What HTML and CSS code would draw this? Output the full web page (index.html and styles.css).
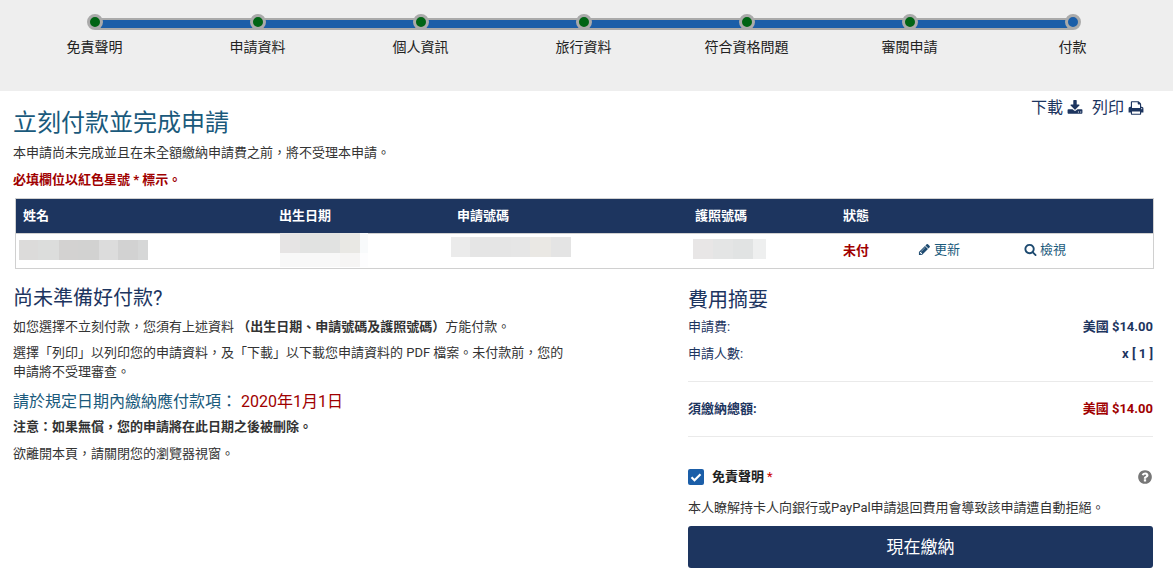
FILE: index.html
```html
<!DOCTYPE html>
<html lang="zh-Hant">
<head>
<meta charset="utf-8">
<title>付款</title>
<link rel="stylesheet" href="styles.css">
</head>
<body>
<nav class="stepper">
  <div class="step done"><span class="dot"></span><span class="step-label">免責聲明</span></div>
  <div class="step done"><span class="dot"></span><span class="step-label">申請資料</span></div>
  <div class="step done"><span class="dot"></span><span class="step-label">個人資訊</span></div>
  <div class="step done"><span class="dot"></span><span class="step-label">旅行資料</span></div>
  <div class="step done"><span class="dot"></span><span class="step-label">符合資格問題</span></div>
  <div class="step done"><span class="dot"></span><span class="step-label">審閱申請</span></div>
  <div class="step current"><span class="dot"></span><span class="step-label">付款</span></div>
</nav>
<main class="page">
  <div class="tools">
    <a class="tool">下載<svg class="tool-icon" viewBox="0 0 1792 1792"><path d="M1344 1344q0-26-19-45t-45-19-45 19-19 45 19 45 45 19 45-19 19-45zm256 0q0-26-19-45t-45-19-45 19-19 45 19 45 45 19 45-19 19-45zm128-224v320q0 40-28 68t-68 28h-1472q-40 0-68-28t-28-68v-320q0-40 28-68t68-28h465l135 136q58 56 136 56t136-56l136-136h464q40 0 68 28t28 68zm-325-569q17 41-14 70l-448 448q-18 19-45 19t-45-19l-448-448q-31-29-14-70 17-39 59-39h256v-448q0-26 19-45t45-19h256q26 0 45 19t19 45v448h256q42 0 59 39z"/></svg></a>
    <a class="tool">列印<svg class="tool-icon" viewBox="0 0 1792 1792"><path d="M448 1536h896v-256h-896v256zm0-640h896v-384h-160q-40 0-68-28t-28-68v-160h-640v640zm1152 64q0-26-19-45t-45-19-45 19-19 45 19 45 45 19 45-19 19-45zm128 0v416q0 13-9.500 22.500t-22.500 9.500h-224v160q0 40-28 68t-68 28h-960q-40 0-68-28t-28-68v-160h-224q-13 0-22.500-9.500t-9.500-22.500v-416q0-79 56.500-135.500t135.500-56.500h64v-544q0-40 28-68t68-28h672q40 0 88 20t76 48l152 152q28 28 48 76t20 88v256h64q79 0 135.500 56.500t56.500 135.500z"/></svg></a>
  </div>
  <h1 class="title">立刻付款並完成申請</h1>
  <p class="text intro">本申請尚未完成並且在未全額繳納申請費之前，將不受理本申請。</p>
  <p class="text required">必填欄位以紅色星號 * 標示。</p>

  <div class="table">
    <div class="thead">
      <div class="cell">姓名</div>
      <div class="cell">出生日期</div>
      <div class="cell">申請號碼</div>
      <div class="cell">護照號碼</div>
      <div class="cell">狀態</div>
      <div class="cell"></div>
      <div class="cell"></div>
    </div>
    <div class="tbody">
      <div class="cell"><span class="blur blur-name"></span></div>
      <div class="cell"><span class="blur blur-dob"></span></div>
      <div class="cell"><span class="blur blur-app"></span></div>
      <div class="cell"><span class="blur blur-pass"></span></div>
      <div class="cell unpaid">未付</div>
      <div class="cell"><a class="row-link"><svg class="row-icon" viewBox="0 0 1792 1792"><path d="M491 1536l91-91-235-235-91 91v107h128v128h107zm523-928q0-22-22-22-10 0-17 7l-542 542q-7 7-7 17 0 22 22 22 10 0 17-7l542-542q7-7 7-17zm-54-192l416 416-832 832h-416v-416zm683 96q0 53-37 90l-166 166-416-416 166-165q36-38 90-38 53 0 91 38l235 234q37 39 37 91z"/></svg>更新</a></div>
      <div class="cell"><a class="row-link"><svg class="row-icon" viewBox="0 0 1792 1792"><path d="M1216 832q0-185-131.500-316.500t-316.500-131.500-316.500 131.500-131.500 316.500 131.500 316.500 316.500 131.500 316.500-131.500 131.500-316.500zm512 832q0 52-38 90t-90 38q-54 0-90-38l-343-342q-179 124-399 124-143 0-273.500-55.500t-225-150-150-225-55.500-273.500 55.500-273.500 150-225 225-150 273.500-55.500 273.500 55.500 225 150 150 225 55.500 273.500q0 220-124 399l343 343q37 37 37 90z"/></svg>檢視</a></div>
    </div>
  </div>

  <div class="columns">
    <section class="left">
      <h2 class="subtitle">尚未準備好付款?</h2>
      <p class="text">如您選擇不立刻付款，您須有上述資料 <b>（出生日期、申請號碼及護照號碼）</b>方能付款。</p>
      <p class="text">選擇「列印」以列印您的申請資料，及「下載」以下載您申請資料的 PDF 檔案。未付款前，您的申請將不受理審查。</p>
      <h3 class="deadline">請於規定日期內繳納應付款項：<span class="date">2020年1月1日</span></h3>
      <p class="text note"><b>注意：如果無償，您的申請將在此日期之後被刪除。</b></p>
      <p class="text">欲離開本頁，請關閉您的瀏覽器視窗。</p>
    </section>
    <section class="right">
      <h2 class="subtitle">費用摘要</h2>
      <div class="fee-row"><span>申請費:</span><b>美國 $14.00</b></div>
      <div class="fee-row"><span>申請人數:</span><b>x [ 1 ]</b></div>
      <hr class="rule">
      <div class="fee-total"><b>須繳納總額:</b><b class="unpaid">美國 $14.00</b></div>
      <hr class="rule">
      <div class="agree">
        <span class="check"><svg viewBox="0 0 16 16"><path d="M3.500 8.300l3 3 6-6" fill="none" stroke="#fff" stroke-width="2.200"/></svg></span>
        <b class="agree-label">免責聲明</b><span class="star">*</span>
        <svg class="help" viewBox="0 0 1792 1792"><path d="M1024 1376v-192q0-14-9-23t-23-9h-192q-14 0-23 9t-9 23v192q0 14 9 23t23 9h192q14 0 23-9t9-23zm256-672q0-88-55.500-163t-138.500-116-170-41q-243 0-371 213-15 24 8 42l132 100q7 6 19 6 16 0 25-12 53-68 86-92 34-24 86-24 48 0 85.500 26t37.500 59q0 38-20 61t-68 45q-63 28-115.500 86.500t-52.500 125.500v36q0 14 9 23t23 9h192q14 0 23-9t9-23q0-19 21.500-49.500t54.500-49.500q32-18 49-28.500t46-35 44.500-48 28-60.500 12.500-81zm384 192q0 209-103 385.500t-279.500 279.500-385.500 103-385.500-103-279.500-279.500-103-385.500 103-385.500 279.500-279.500 385.500-103 385.500 103 279.500 279.500 103 385.500z"/></svg>
      </div>
      <p class="text agree-text">本人瞭解持卡人向銀行或PayPal申請退回費用會導致該申請遭自動拒絕。</p>
      <button class="pay" type="button">現在繳納</button>
    </section>
  </div>
</main>
</body>
</html>
```

FILE: styles.css
```css
* { box-sizing: border-box; }
html, body { margin: 0; padding: 0; }
body {
  font-family: Roboto, "Noto Sans CJK TC", sans-serif;
  font-size: 13px;
  line-height: 1.5;
  color: #333;
  background: #fff;
  overflow: hidden;
}
.stepper {
  display: flex;
  height: 91px;
  padding: 14px 19px 0 13px;
  background: #eee;
}
.step {
  position: relative;
  flex: 1 1 0;
  display: flex;
  flex-direction: column;
  align-items: center;
}
.step::after {
  content: "";
  position: absolute;
  top: 4px;
  left: 50%;
  width: 100%;
  height: 8px;
  border: solid #aaa;
  border-width: 2px 0;
  background-color: #1b5ea8;
}
.step:last-child::after { display: none; }
.dot {
  position: relative;
  z-index: 1;
  width: 16px;
  height: 16px;
  border: 3px solid #aaa;
  border-radius: 50%;
  background: #006414;
}
.current .dot { background: #1b5ea8; }
.step-label {
  margin-top: 7px;
  font-size: 14px;
  line-height: 21px;
  color: #212121;
  white-space: nowrap;
}
.page {
  position: relative;
  padding: 14px 19px 0 13px;
}
.tools {
  position: absolute;
  top: 6px;
  right: 29px;
  display: flex;
  gap: 9px;
}
.tool {
  display: flex;
  align-items: center;
  gap: 4px;
  font-size: 16px;
  line-height: 22px;
  color: #1d355f;
}
.tool-icon { width: 16px; height: 16px; fill: #1d355f; }
.title {
  margin: 0;
  font-size: 24px;
  font-weight: 400;
  line-height: 36px;
  color: #1a5a7c;
}
.text { margin: 0; font-size: 13px; line-height: 19px; color: #333; }
.intro { margin-top: 2px; }
.required { margin-top: 8px; font-weight: 700; color: #a00000; }
.table { margin: 9px 0 0 2px; border: 1px solid #d0d0d0; }
.thead, .tbody {
  display: grid;
  grid-template-columns: 256px 178px 238px 148px 75px 106px 1fr;
  align-items: center;
}
.thead { height: 35px; background: #1d355f; color: #fff; font-weight: 700; border-bottom: 1px solid #d0d0d0; }
.tbody { position: relative; height: 34px; }
.cell { padding: 0 7px; }
.blur { position: absolute; display: block; }
.blur-name {
  left: 3px; top: 6px; width: 129px; height: 20px;
  background: linear-gradient(90deg, #dcdbda 0 15%, #dcdddc 15% 31%, #d3d2d1 31% 46%, #d2d2d1 46% 62%, #dcdcdc 62% 77%, #d2d2d2 77% 92%, #d6d7d7 92%);
}
.blur-dob {
  left: 264px; top: -1px; width: 88px; height: 34px;
  background:
    linear-gradient(90deg, #e6e4e4 0 23%, #e1e2e1 23% 68%, #e9e8e4 68% 91%, #f8fafb 91%) 0 0 / 100% 20px no-repeat,
    linear-gradient(90deg, #f8f8f8 0 68%, #f6f5f4 68% 91%, #fdfdfe 91%) 0 20px / 100% 14px no-repeat;
}
.blur-app {
  left: 435px; top: 3px; width: 120px; height: 20px;
  background: linear-gradient(90deg, #ebebeb 0 16%, #e5e5e5 16% 50%, #e6e6e6 50% 66%, #eae8e4 66% 83%, #e4e4e4 83%);
}
.blur-pass {
  left: 677px; top: 5px; width: 73px; height: 20px;
  background: linear-gradient(90deg, #e8e6e6 0 27%, #e4e5e5 27% 55%, #e1e3e3 55% 82%, #eeefef 82%);
}
.unpaid { color: #a00000; font-weight: 700; }
.row-link { display: inline-flex; align-items: center; gap: 3px; color: #1a5a7c; }
.row-icon { width: 13px; height: 13px; fill: #1d4a70; }
.columns { display: flex; margin-top: 14px; }
.left { width: 552px; }
.right { width: 465px; margin-left: 123px; }
.subtitle { margin: 0; font-size: 20px; font-weight: 400; line-height: 30px; color: #1d355f; }
.right .subtitle { height: 30px; padding-top: 2px; }
.left .text { margin-bottom: 7px; }
.left .note { margin-bottom: 8px; }
.left .subtitle { margin-bottom: 4px; }
.deadline { margin: 9px 0 3px; font-size: 16px; font-weight: 400; line-height: 24px; color: #1a5a7c; }
.date { margin-left: 4px; color: #a00000; }
.fee-row {
  display: flex;
  justify-content: space-between;
  height: 27px;
  align-items: center;
  color: #1d355f;
  line-height: 19px;
}
.rule { margin: 0; border: 0; border-top: 1px solid #eaeaea; }
.fee-total {
  display: flex;
  justify-content: space-between;
  align-items: center;
  height: 54px;
  color: #1d355f;
}
.fee-row + .rule { margin-top: 14px; }
.agree { display: flex; align-items: center; margin-top: 32px; height: 16px; }
.check { display: flex; width: 16px; height: 16px; border-radius: 2px; background: #1b5ea8; }
.check svg { width: 16px; height: 16px; }
.agree-label { margin-left: 8px; color: #212121; }
.star { margin-left: 3px; color: #c00; }
.help { width: 16px; height: 16px; margin-left: auto; fill: #777; }
.agree-text { margin-top: 13px; color: #333; }
.pay {
  display: block;
  width: 100%;
  height: 42px;
  margin-top: 9px;
  border: 0;
  border-radius: 3px;
  background: #1d355f;
  color: #fff;
  font: 400 17px/1 Roboto, "Noto Sans CJK TC", sans-serif;
}
```
